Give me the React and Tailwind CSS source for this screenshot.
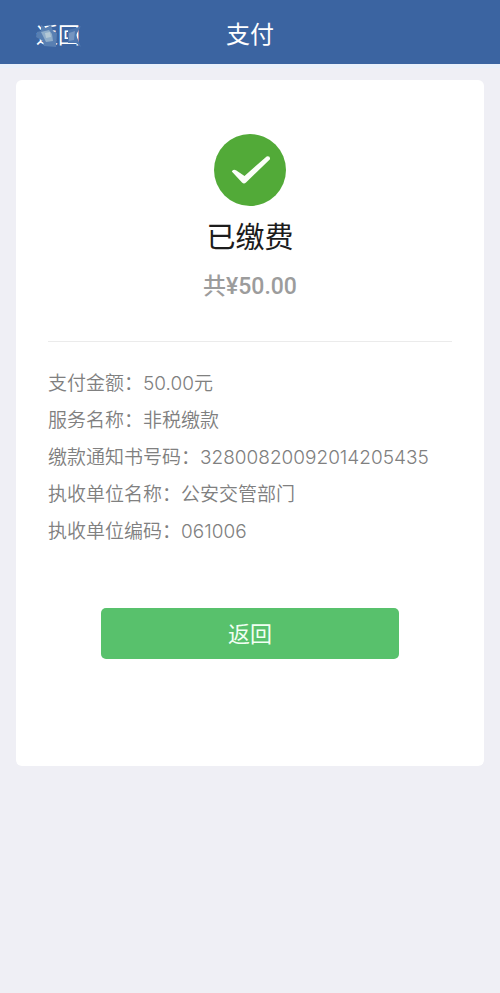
const details = [
  { label: "支付金额", value: "50.00元" },
  { label: "服务名称", value: "非税缴款" },
  { label: "缴款通知书号码", value: "32800820092014205435" },
  { label: "执收单位名称", value: "公安交管部门" },
  { label: "执收单位编码", value: "061006" },
];

function Smudge() {
  return (
    <svg
      className="pointer-events-none absolute inset-0 h-full w-full"
      viewBox="0 0 48 32"
      aria-hidden="true"
    >
      <defs>
        <filter id="soft" x="-30%" y="-30%" width="160%" height="160%">
          <feGaussianBlur stdDeviation="0.7" />
        </filter>
      </defs>
      <g filter="url(#soft)">
        <path d="M7 6L12 9L17 6L19 12L23 14L22 28L10 27L9 22L2 18L3 13L7 12Z" fill="#587fb2" />
        <path d="M7 13L15 11L18 15L19 22L12 23Z" fill="#8fadca" />
        <path d="M11 14L16 13L17 18L12 19Z" fill="#b3c8d6" />
        <path d="M34 11L42 9L47 7L42 16L47 28L42 24L34 24Z" fill="#4e76af" />
        <path d="M35 14L41 12L40 21L35 22Z" fill="#7494c0" />
      </g>
    </svg>
  );
}

function Header() {
  return (
    <header className="grid h-16 grid-cols-3 items-center bg-[#3b64a1] pt-1.5 text-white">
      <button type="button" className="relative ml-[34px] h-8 w-12 justify-self-start text-[22px] leading-8">
        返回
        <Smudge />
      </button>
      <h1 className="text-center text-2xl leading-8">支付</h1>
    </header>
  );
}

export default function App() {
  return (
    <div className="min-h-screen bg-[#efeff5] font-['Inter','Noto_Sans_CJK_SC',sans-serif]">
      <Header />
      <div className="h-1 bg-[#e9f0fa]" />
      <main className="mx-4 mt-3 rounded-md bg-white px-8 pt-[54px] pb-[107px]">
        <section className="flex flex-col items-center border-b border-[#ebebeb] pb-[38px]">
          <svg className="h-[72px] w-[72px]" viewBox="0 0 72 72" aria-hidden="true">
            <circle cx="36" cy="36" r="36" fill="#52aa38" />
            <path
              d="M17.8 37.6Q19 34.6 22 36.2L30.5 42L52.6 22.4Q56.4 21.6 56 25.2L32 48.6Q30 50.6 28 48.6Z"
              fill="#fbfff8"
            />
          </svg>
          <h2 className="mt-3 text-[29px] leading-10 text-[#1c1c1c]">已缴费</h2>
          <p className="mt-[13px] font-['Roboto','Noto_Sans_CJK_SC',sans-serif] text-[23px] leading-8 font-medium text-[#9c9c9c]">
            共¥50.00
          </p>
        </section>
        <dl className="mt-[23px] text-[19px] font-[350] text-[#808080]">
          {details.map((item) => (
            <div key={item.label} className="flex h-[37px] items-center leading-7 whitespace-nowrap">
              <dt>{item.label}：</dt>
              <dd>{item.value}</dd>
            </div>
          ))}
        </dl>
        <div className="mt-[58px] flex justify-center">
          <button
            type="button"
            className="h-[51px] w-[298px] rounded-[5px] bg-[#58c16c] text-[22px] leading-8 text-[#f1fff3]"
          >
            返回
          </button>
        </div>
      </main>
    </div>
  );
}
